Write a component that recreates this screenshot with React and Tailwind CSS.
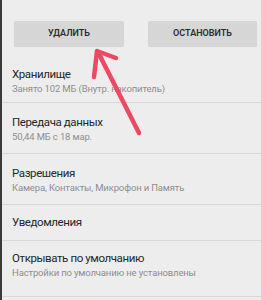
export default function App() {
  const rows = [
    { title: "Хранилище", sub: "Занято 102 МБ (Внутр. накопитель)", cls: "pt-[20px] pb-[7px]" },
    { title: "Передача данных", sub: "50,44 МБ с 18 мар.", cls: "pt-[11px] pb-[10px]" },
    { title: "Разрешения", sub: "Камера, Контакты, Микрофон и Память", cls: "pt-[11px] pb-[10px]" },
    { title: "Уведомления", sub: null, cls: "pt-[9px] pb-[10px]" },
    { title: "Открывать по умолчанию", sub: "Настройки по умолчанию не установлены", cls: "pt-[9px] pb-[17px]" },
  ];

  return (
    <div
      className="relative w-[261px] h-[300px] overflow-hidden bg-[#ededed] border-l-2 border-[#3a3a3a]"
      style={{ fontFamily: "Roboto, 'Noto Sans', sans-serif" }}
    >
      {/* Buttons */}
      <div className="flex pt-[21px] pl-[12px] pr-[4px] gap-[24px]">
        <button className="w-[110px] h-[25px] bg-[#d6d6d6] rounded-[2px] shadow-[0_1px_1px_rgba(0,0,0,0.12)] text-[9px] font-semibold text-[#2a2a2a]">
          УДАЛИТЬ
        </button>
        <button className="w-[109px] h-[25px] bg-[#d6d6d6] rounded-[2px] shadow-[0_1px_1px_rgba(0,0,0,0.12)] text-[9px] font-semibold text-[#2a2a2a]">
          ОСТАНОВИТЬ
        </button>
      </div>

      {/* Settings list */}
      <div className="flex flex-col">
        {rows.map((r) => (
          <div key={r.title} className={`border-b border-[#d8d8d8] pl-[10px] ${r.cls}`}>
            <div className="text-[11.5px] leading-[16px] tracking-[-0.4px] text-[#262626]">{r.title}</div>
            {r.sub && (
              <div className="text-[9.5px] leading-[13px] tracking-[-0.15px] text-[#8e8e8e] whitespace-nowrap">{r.sub}</div>
            )}
          </div>
        ))}
      </div>

      {/* Red arrow annotation */}
      <svg className="absolute left-0 top-0" width="261" height="300" viewBox="0 0 261 300">
        <g stroke="#ee4862" strokeWidth="4.5" strokeLinecap="round" strokeLinejoin="round" fill="none">
          <line x1="137" y1="133" x2="96" y2="52" />
          <polyline points="92,77 95,51 114,58" />
        </g>
      </svg>
    </div>
  );
}
